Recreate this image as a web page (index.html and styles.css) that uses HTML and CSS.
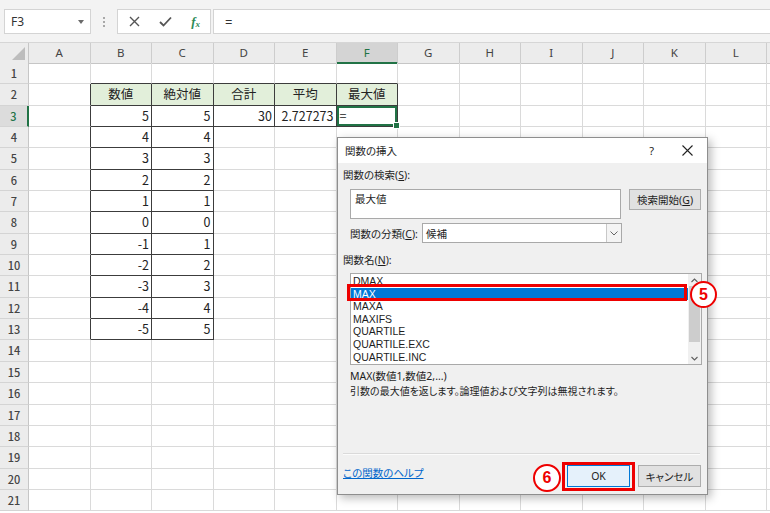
FILE: index.html
```html
<!DOCTYPE html>
<html lang="ja">
<head>
<meta charset="utf-8">
<title>関数の挿入</title>
<link rel="stylesheet" href="styles.css">
</head>
<body>
<div class="toolbar">
  <div class="namebox"><span>F3</span><i class="caret"></i></div>
  <div class="dots"><i></i><i></i><i></i></div>
  <div class="fbtns">
    <svg width="11" height="11" viewBox="0 0 11 11"><path d="M1 1L10 10M10 1L1 10" stroke="#555" stroke-width="1.4" fill="none"/></svg>
    <svg width="13" height="11" viewBox="0 0 13 11"><path d="M1 6L4.5 9.5L12 1.5" stroke="#555" stroke-width="1.8" fill="none"/></svg>
    <span class="fx">f<sub>x</sub></span>
  </div>
  <div class="finput">=</div>
</div>
<div class="sheet">
  <div class="r hdr"><span class="corner"></span><span>A</span><span>B</span><span>C</span><span>D</span><span>E</span><span class="on">F</span><span>G</span><span>H</span><span>I</span><span>J</span><span>K</span><span>L</span><span></span></div>
  <div class="r"><span>1</span><span></span><span class="kb"></span><span class="kb"></span><span class="kb"></span><span class="kb"></span><span class="kb"></span><span></span><span></span><span></span><span></span><span></span><span></span><span></span></div>
  <div class="r"><span>2</span><span class="kr"></span><span class="k h">数値</span><span class="k h">絶対値</span><span class="k h">合計</span><span class="k h">平均</span><span class="k h">最大値</span><span></span><span></span><span></span><span></span><span></span><span></span><span></span></div>
  <div class="r"><span class="on">3</span><span class="kr"></span><span class="k n">5</span><span class="k n">5</span><span class="k n">30</span><span class="k n">2.727273</span><span class="k sel">=</span><span></span><span></span><span></span><span></span><span></span><span></span><span></span></div>
  <div class="r"><span>4</span><span class="kr"></span><span class="k n">4</span><span class="k n">4</span><span></span><span></span><span></span><span></span><span></span><span></span><span></span><span></span><span></span><span></span></div>
  <div class="r"><span>5</span><span class="kr"></span><span class="k n">3</span><span class="k n">3</span><span></span><span></span><span></span><span></span><span></span><span></span><span></span><span></span><span></span><span></span></div>
  <div class="r"><span>6</span><span class="kr"></span><span class="k n">2</span><span class="k n">2</span><span></span><span></span><span></span><span></span><span></span><span></span><span></span><span></span><span></span><span></span></div>
  <div class="r"><span>7</span><span class="kr"></span><span class="k n">1</span><span class="k n">1</span><span></span><span></span><span></span><span></span><span></span><span></span><span></span><span></span><span></span><span></span></div>
  <div class="r"><span>8</span><span class="kr"></span><span class="k n">0</span><span class="k n">0</span><span></span><span></span><span></span><span></span><span></span><span></span><span></span><span></span><span></span><span></span></div>
  <div class="r"><span>9</span><span class="kr"></span><span class="k n">-1</span><span class="k n">1</span><span></span><span></span><span></span><span></span><span></span><span></span><span></span><span></span><span></span><span></span></div>
  <div class="r"><span>10</span><span class="kr"></span><span class="k n">-2</span><span class="k n">2</span><span></span><span></span><span></span><span></span><span></span><span></span><span></span><span></span><span></span><span></span></div>
  <div class="r"><span>11</span><span class="kr"></span><span class="k n">-3</span><span class="k n">3</span><span></span><span></span><span></span><span></span><span></span><span></span><span></span><span></span><span></span><span></span></div>
  <div class="r"><span>12</span><span class="kr"></span><span class="k n">-4</span><span class="k n">4</span><span></span><span></span><span></span><span></span><span></span><span></span><span></span><span></span><span></span><span></span></div>
  <div class="r"><span>13</span><span class="kr"></span><span class="k n">-5</span><span class="k n">5</span><span></span><span></span><span></span><span></span><span></span><span></span><span></span><span></span><span></span><span></span></div>
  <div class="r"><span>14</span><span></span><span></span><span></span><span></span><span></span><span></span><span></span><span></span><span></span><span></span><span></span><span></span><span></span></div>
  <div class="r"><span>15</span><span></span><span></span><span></span><span></span><span></span><span></span><span></span><span></span><span></span><span></span><span></span><span></span><span></span></div>
  <div class="r"><span>16</span><span></span><span></span><span></span><span></span><span></span><span></span><span></span><span></span><span></span><span></span><span></span><span></span><span></span></div>
  <div class="r"><span>17</span><span></span><span></span><span></span><span></span><span></span><span></span><span></span><span></span><span></span><span></span><span></span><span></span><span></span></div>
  <div class="r"><span>18</span><span></span><span></span><span></span><span></span><span></span><span></span><span></span><span></span><span></span><span></span><span></span><span></span><span></span></div>
  <div class="r"><span>19</span><span></span><span></span><span></span><span></span><span></span><span></span><span></span><span></span><span></span><span></span><span></span><span></span><span></span></div>
  <div class="r"><span>20</span><span></span><span></span><span></span><span></span><span></span><span></span><span></span><span></span><span></span><span></span><span></span><span></span><span></span></div>
  <div class="r"><span>21</span><span></span><span></span><span></span><span></span><span></span><span></span><span></span><span></span><span></span><span></span><span></span><span></span><span></span></div>
</div>

<div class="dialog">
  <div class="dlg-title">
    <span class="dlg-name">関数の挿入</span>
    <span class="dlg-help">?</span>
    <svg class="dlg-close" width="11" height="11" viewBox="0 0 11 11"><path d="M0.5 0.5L10.5 10.5M10.5 0.5L0.5 10.5" stroke="#222" stroke-width="1.1" fill="none"/></svg>
  </div>
  <div class="dlg-body">
    <div class="lbl">関数の検索(<u>S</u>):</div>
    <div class="search-row">
      <div class="textbox">最大値</div>
      <div class="btn btn-search">検索開始(<u>G</u>)</div>
    </div>
    <div class="cat-row">
      <span class="cat-lbl">関数の分類(<u>C</u>):</span>
      <div class="select"><span class="select-val">候補</span><span class="select-arrow"><svg width="8" height="5" viewBox="0 0 8 5"><path d="M0.5 0.5L4 4L7.5 0.5" stroke="#666" stroke-width="1" fill="none"/></svg></span></div>
    </div>
    <div class="lbl lbl-fn">関数名(<u>N</u>):</div>
    <div class="listbox">
      <div class="items">
        <div class="item">DMAX</div>
        <div class="item active">MAX</div>
        <div class="item">MAXA</div>
        <div class="item">MAXIFS</div>
        <div class="item">QUARTILE</div>
        <div class="item">QUARTILE.EXC</div>
        <div class="item">QUARTILE.INC</div>
      </div>
      <div class="scrollbar">
        <span class="sb-arrow"><svg width="7" height="5" viewBox="0 0 7 5"><path d="M0.5 4L3.5 1L6.5 4" stroke="#606060" stroke-width="1.1" fill="none"/></svg></span>
        <span class="sb-thumb"></span>
        <span class="sb-track"></span>
        <span class="sb-arrow"><svg width="7" height="5" viewBox="0 0 7 5"><path d="M0.5 1L3.5 4L6.5 1" stroke="#606060" stroke-width="1.1" fill="none"/></svg></span>
      </div>
    </div>
    <div class="desc desc-sig">MAX(数値1,数値2,...)</div>
    <div class="desc desc-text">引数の最大値を返します。論理値および文字列は無視されます。</div>
    <div class="spacer"></div>
    <div class="sep"></div>
    <div class="footer">
      <a class="help" href="#">この関数のヘルプ</a>
      <div class="btns">
        <div class="btn btn-ok">OK</div>
        <div class="btn btn-cancel">キャンセル</div>
      </div>
    </div>
  </div>
</div>

<div class="mark mark-max"></div>
<div class="num num5">5</div>
<div class="mark mark-ok"></div>
<div class="num num6">6</div>
</body>
</html>
```
FILE: styles.css
```css
* { box-sizing: border-box; margin: 0; padding: 0; }
body {
  margin: 0;
  width: 770px;
  height: 513px;
  overflow: hidden;
  position: relative;
  background: #fff;
  font-family: "Noto Sans", "Noto Sans CJK JP", sans-serif;
  color: #222;
}

/* formula bar */
.toolbar {
  height: 43px;
  background: #f3f3f3;
  display: flex;
  align-items: flex-start;
  padding: 9px 0 0 4px;
  border-bottom: 1px solid #d6d6d6;
}
.namebox {
  width: 87px;
  height: 25px;
  background: #fff;
  border: 1px solid #d4d4d4;
  display: flex;
  align-items: center;
  justify-content: space-between;
  padding: 0 6px 0 6px;
  font-size: 12px;
  color: #333;
}
.caret {
  width: 0; height: 0;
  border-left: 3.5px solid transparent;
  border-right: 3.5px solid transparent;
  border-top: 4px solid #6a6a6a;
}
.dots {
  width: 26px;
  height: 25px;
  display: flex;
  flex-direction: column;
  align-items: center;
  justify-content: center;
  gap: 2px;
}
.dots i { width: 2px; height: 2px; background: #a8a8a8; }
.fbtns {
  width: 94px;
  height: 25px;
  background: #fff;
  border: 1px solid #d4d4d4;
  display: flex;
  align-items: center;
  justify-content: space-between;
  padding: 0 10px 0 11px;
}
.fx {
  font-family: "Liberation Serif", serif;
  font-style: italic;
  font-weight: bold;
  color: #2e8b57;
  font-size: 13px;
  line-height: 1;
}
.fx sub { font-size: 9px; vertical-align: -1px; }
.finput {
  flex: 1;
  height: 25px;
  margin-left: 2px;
  background: #fff;
  border: 1px solid #d4d4d4;
  border-right: none;
  padding-left: 11px;
  font-size: 13px;
  display: flex;
  align-items: center;
  color: #333;
}

/* sheet grid */
.sheet { display: flex; flex-direction: column; }
.r {
  display: grid;
  grid-template-columns: 29px repeat(12, 61.5px) 1fr;
  height: 21.35px;
}
.r > span {
  position: relative;
  border-right: 1px solid #dadada;
  border-bottom: 1px solid #dadada;
  font-family: "Noto Sans CJK JP", sans-serif;
  font-size: 12.5px;
  line-height: 20px;
  padding: 0 2px;
  white-space: nowrap;
  color: #222;
}
.r > span:first-child {
  background: #ececec;
  border-right-color: #c6c6c6;
  border-bottom-color: #d4d4d4;
  text-align: center;
  color: #444;
  font-size: 11px;
  font-weight: 500;
  padding: 0;
}
.r > span.on:first-child {
  background: #dcdcdc;
  color: #217346;
  border-right: 2px solid #217346;
}
.hdr { height: 20px; }
.hdr > span {
  background: #ececec;
  border-right-color: #cdcdcd;
  border-bottom-color: #c6c6c6;
  text-align: center;
  color: #444;
  font-family: "Noto Sans", sans-serif;
  font-size: 11.5px;
  line-height: 19px;
}
.hdr > span.on {
  background: #d4d4d4;
  color: #217346;
  border-bottom: 2px solid #217346;
}
.hdr > span.corner { background: #ececec; }
.corner::after {
  content: "";
  position: absolute;
  right: 3px;
  bottom: 3px;
  width: 13px;
  height: 13px;
  background: #bdbdbd;
  clip-path: polygon(100% 0, 100% 100%, 0 100%);
}
.r > span.kb { border-bottom-color: #3c3c3c; }
.r > span.kr { border-right-color: #3c3c3c; }
.r > span.k { border-right-color: #3c3c3c; border-bottom-color: #3c3c3c; }
.r > span.h { background: #e2efda; text-align: center; }
.r > span.n { text-align: right; }
.r > span.sel {
  box-shadow: inset 0 0 0 2px #217346;
  padding-left: 3px;
}
.r > span.sel::after {
  content: "";
  position: absolute;
  right: -3px;
  bottom: -3px;
  width: 5px;
  height: 5px;
  background: #217346;
  border: 1px solid #fff;
  z-index: 2;
}

/* dialog */
.dialog {
  position: absolute;
  left: 337px;
  top: 137px;
  width: 371px;
  height: 358px;
  background: #f0f0f0;
  border: 1px solid #8e8e8e;
  box-shadow: 3px 3px 9px rgba(0, 0, 0, 0.28);
  display: flex;
  flex-direction: column;
  font-size: 10.5px;
  color: #1e1e1e;
  font-feature-settings: "palt";
  z-index: 5;
}
.dlg-title {
  height: 25px;
  background: #fff;
  display: flex;
  align-items: center;
  padding-left: 7px;
}
.dlg-name { flex: 1; font-size: 10.5px; }
.dlg-help { font-size: 11px; margin-right: 28px; color: #222; }
.dlg-close { margin-right: 14px; }
.dlg-body {
  flex: 1;
  display: flex;
  flex-direction: column;
  padding: 0 6px 7px 5px;
}
.lbl { margin-top: 5px; line-height: 14px; }
.lbl-fn { margin-top: 10px; }
.search-row {
  margin-top: 7px;
  margin-left: 7px;
  display: flex;
  align-items: flex-start;
  gap: 8px;
}
.textbox {
  width: 272px;
  height: 30px;
  background: #fff;
  border: 1px solid #a9a9a9;
  padding: 2px 4px;
  line-height: 14px;
}
.btn {
  height: 22px;
  background: #e1e1e1;
  border: 1px solid #adadad;
  display: flex;
  align-items: center;
  justify-content: center;
}
.btn-search { width: 72px; height: 21px; }
.cat-row {
  margin-top: 4px;
  margin-left: 7px;
  display: flex;
  align-items: center;
  height: 20px;
}
.cat-lbl { width: 72px; }
.select {
  width: 200px;
  height: 20px;
  background: #fff;
  border: 1px solid #a9a9a9;
  display: flex;
  align-items: center;
}
.select-val { flex: 1; padding-left: 3px; }
.select-arrow {
  width: 15px;
  height: 100%;
  border-left: 1px solid #c8c8c8;
  background: #f4f4f4;
  display: flex;
  align-items: center;
  justify-content: center;
}
.listbox {
  margin-top: 6px;
  margin-left: 7px;
  width: 352px;
  height: 92px;
  background: #fff;
  border: 1px solid #a9a9a9;
  display: flex;
  overflow: hidden;
}
.items { flex: 1; }
.item {
  height: 12.6px;
  line-height: 12.6px;
  padding-left: 2px;
  font-family: "Liberation Sans", sans-serif;
  font-size: 10.5px;
  color: #1e1e1e;
}
.item:first-child { margin-top: 1px; }
.item.active { background: #0078d7; color: #fff; }
.scrollbar {
  width: 13px;
  background: #f0f0f0;
  display: flex;
  flex-direction: column;
}
.sb-arrow {
  height: 12px;
  display: flex;
  align-items: center;
  justify-content: center;
}
.sb-thumb { height: 56px; margin: 0 1px; background: #cdcdcd; }
.sb-track { flex: 1; }
.desc { margin-left: 7px; line-height: 15px; }
.desc-sig { margin-top: 4px; }
.desc-text { font-size: 10px; }
.spacer { flex: 1; }
.sep {
  height: 2px;
  border-top: 1px solid #dadada;
  border-bottom: 1px solid #fbfbfb;
  margin-right: 1px;
}
.footer {
  display: flex;
  align-items: flex-end;
  justify-content: space-between;
  margin-top: 10px;
}
.help {
  color: #0066cc;
  text-decoration: underline;
  margin-bottom: 7px;
}
.btns { display: flex; gap: 8px; }
.btn-ok, .btn-cancel { width: 63px; height: 22px; }
.btn-ok { background: #e5f1fb; border-color: #0078d7; }

/* annotations */
.mark {
  position: absolute;
  border: 3px solid #ee0000;
  z-index: 10;
}
.mark-max { left: 347px; top: 284px; width: 340px; height: 17px; }
.mark-ok { left: 562px; top: 462px; width: 73px; height: 29px; }
.num {
  position: absolute;
  width: 27px;
  height: 27px;
  border: 2px solid #ee0000;
  border-radius: 50%;
  background: #fff;
  color: #ee0000;
  font-family: "Liberation Sans", sans-serif;
  font-weight: bold;
  font-size: 16px;
  display: flex;
  align-items: center;
  justify-content: center;
  z-index: 10;
}
.num5 { left: 690px; top: 281px; }
.num6 { left: 533px; top: 464px; width: 28px; height: 28px; }
```
